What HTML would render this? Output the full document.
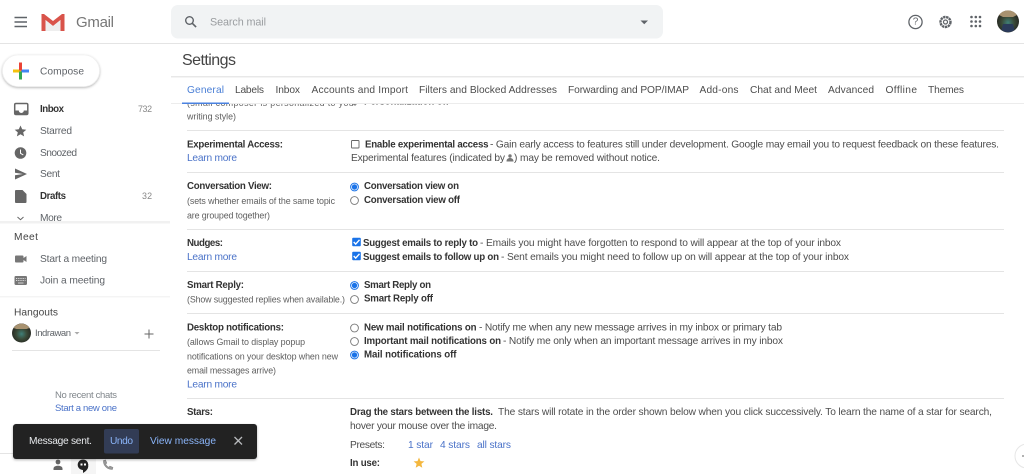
<!DOCTYPE html>
<html><head><meta charset="utf-8"><title>Gmail Settings</title>
<style>
html,body{margin:0;padding:0;background:#fff;width:1024px;height:474px;overflow:hidden}
svg{display:block;filter:blur(.38px)}
text{font-family:"Liberation Sans",sans-serif;font-size:10.2px;fill:#4d4d4d;dominant-baseline:central;transform:translateY(1.500px)}
.b{font-weight:bold;fill:#333;font-size:9.7px}
.l{fill:#4a72c8}
.s{font-size:8.900px;fill:#5f5f5f}
.n{fill:#5f6368}
.line{stroke:#e4e4e4;stroke-width:1}
</style></head><body>
<svg width="1024" height="474" viewBox="0 0 1024 474" xmlns="http://www.w3.org/2000/svg">
<defs>
<filter id="sh" x="-20%" y="-30%" width="140%" height="170%"><feDropShadow dx="0" dy="1" stdDeviation="1.200" flood-color="#000" flood-opacity=".3"/></filter>
<g id="rad"><circle r="3.900" fill="#fff" stroke="#777" stroke-width=".9"/></g>
<g id="radon"><circle r="3.900" fill="#fff" stroke="#1a73e8" stroke-width="1"/><circle r="2.700" fill="#1a73e8"/></g>
<g id="chk"><rect x="-4.300" y="-4.300" width="8.600" height="8.600" rx="1" fill="#1a73e8"/><path d="M-2.800 0 L-.8 2.100 L3 -2.200" fill="none" stroke="#fff" stroke-width="1.400"/></g>
<radialGradient id="av" cx=".5" cy=".55" r=".55"><stop offset="0" stop-color="#3f7f78"/><stop offset=".5" stop-color="#3a4a38"/><stop offset="1" stop-color="#242420"/></radialGradient>
</defs>

<!-- header -->
<path d="M14.500 17.500h12.500M14.500 22h12.500M14.500 26.500h12.500" stroke="#5f6368" stroke-width="1.500"/>
<path d="M41.500 31V14h2.500l9 7 9-7h2.500v17h-4V20l-7.500 6-7.500-6v11z" fill="#d9534a"/>
<path d="M45.500 31V20l7.500 6 7.500-6v11z" fill="#eeeeee"/>
<text x="76" y="21" textLength="38" style="font-size:15px;fill:#777">Gmail</text>
<rect x="171" y="5" width="492" height="33.500" rx="7" fill="#f1f3f4"/>
<circle cx="189.500" cy="20.500" r="3.800" fill="none" stroke="#5f6368" stroke-width="1.400"/>
<path d="M192.300 23.300l3.800 3.800" stroke="#5f6368" stroke-width="1.600"/>
<text x="210" y="21" textLength="56" style="font-size:10.800px;fill:#9a9da0">Search mail</text>
<path d="M640.500 20.500h7.500l-3.750 3.700z" fill="#5f6368"/>
<circle cx="915.500" cy="22" r="6.600" fill="none" stroke="#5f6368" stroke-width="1.300"/>
<text x="915.500" y="20.500" text-anchor="middle" style="font-size:10px;fill:#5f6368">?</text>
<circle cx="945.500" cy="22" r="5" fill="none" stroke="#5f6368" stroke-width="2.400" stroke-dasharray="2.400 .6"/>
<circle cx="945.500" cy="22" r="2" fill="#fff" stroke="#5f6368" stroke-width="1.200"/>
<g fill="#5f6368"><circle cx="971.500" cy="17" r="1.300"/><circle cx="975.800" cy="17" r="1.300"/><circle cx="980" cy="17" r="1.300"/><circle cx="971.500" cy="21.500" r="1.300"/><circle cx="975.800" cy="21.500" r="1.300"/><circle cx="980" cy="21.500" r="1.300"/><circle cx="971.500" cy="26" r="1.300"/><circle cx="975.800" cy="26" r="1.300"/><circle cx="980" cy="26" r="1.300"/></g>
<circle cx="1008" cy="21.500" r="11" fill="url(#av)"/>
<path d="M999 15a11 11 0 0 1 18 0l-4 2h-10z" fill="#a89270"/>
<path d="M1003 24h10l1.500 6a11 11 0 0 1-13 0z" fill="#2a3a5a"/>
<line x1="0" y1="43.500" x2="1024" y2="43.500" class="line"/>

<!-- sidebar -->
<rect x="2.500" y="55" width="97" height="31.500" rx="15.750" fill="#fff" stroke="#eee" stroke-width=".6" filter="url(#sh)"/>
<rect x="13" y="69.500" width="8" height="3" fill="#f4c20d"/>
<rect x="21" y="69.500" width="8" height="3" fill="#4285f4"/>
<rect x="19" y="62.500" width="3" height="8" fill="#ea4335"/>
<rect x="19" y="71.500" width="3" height="8" fill="#34a853"/>
<text x="40" y="70.500" textLength="44" class="n">Compose</text>

<path d="M16 103.500h10.500a1.300 1.300 0 0 1 1.300 1.300v8.400a1.300 1.300 0 0 1-1.300 1.300H16a1.300 1.300 0 0 1-1.300-1.300v-8.400a1.300 1.300 0 0 1 1.300-1.300z" fill="none" stroke="#666" stroke-width="1.500"/>
<path d="M15 110.500h3.800a2.500 2.500 0 0 0 5 0H27.500v3.500H15z" fill="#666"/>
<text x="40" y="108" textLength="24" class="b">Inbox</text>
<text x="138" y="107.500" textLength="14" class="s" style="fill:#888">732</text>
<path d="M20.500 125.500l1.700 3.800 4.100.4-3.100 2.700.9 4-3.600-2.100-3.600 2.100.9-4-3.100-2.700 4.100-.4z" fill="#666"/>
<text x="40" y="130" textLength="32" class="n">Starred</text>
<circle cx="20.500" cy="153" r="5.800" fill="#666"/>
<path d="M20.500 149.500v3.800l2.800 1.600" fill="none" stroke="#fff" stroke-width="1"/>
<text x="40" y="152" textLength="37" class="n">Snoozed</text>
<path d="M15 168.500l12 5.500-12 5.500v-4.300l8-1.200-8-1.200z" fill="#666"/>
<text x="40" y="173" textLength="20" class="n">Sent</text>
<path d="M16 190h6.500l4 4v8a1 1 0 0 1-1 1H16a1 1 0 0 1-1-1v-11a1 1 0 0 1 1-1z" fill="#666"/>
<text x="40" y="195" textLength="26" class="b">Drafts</text>
<text x="142" y="194.500" textLength="10" class="s" style="fill:#888">32</text>
<path d="M17.500 217l3 2.700 3-2.700" fill="none" stroke="#666" stroke-width="1"/>
<text x="40" y="217" textLength="22" class="n">More</text>
<rect x="0" y="221" width="170" height="2.500" fill="#f1f1f1"/>
<text x="14" y="236" textLength="24" style="fill:#444">Meet</text>
<rect x="15" y="255.500" width="8.500" height="7" rx="1" fill="#777"/><path d="M23.500 258l3-2v6l-3-2z" fill="#777"/>
<text x="40" y="258" textLength="67" class="n">Start a meeting</text>
<rect x="14.500" y="276" width="12.500" height="9" rx="1.200" fill="#777"/>
<path d="M16 278.500h9.500M16 280.500h9.500" stroke="#ddd" stroke-width=".9" stroke-dasharray="1 .8"/><path d="M18 283h5.500" stroke="#ddd" stroke-width=".9"/>
<text x="40" y="279.500" textLength="65" class="n">Join a meeting</text>
<rect x="0" y="296" width="170" height="1.500" fill="#f4f4f4"/>
<text x="14" y="311.500" textLength="44" style="fill:#444">Hangouts</text>
<circle cx="21.500" cy="333" r="9.500" fill="url(#av)"/>
<path d="M13.500 328a9.500 9.500 0 0 1 16 0l-3 1h-10z" fill="#a89270"/>
<text x="35" y="332" textLength="36" class="n" style="font-size:9.500px">Indrawan</text>
<path d="M74.500 332h5l-2.500 2.500z" fill="#aaa"/>
<path d="M149 329.500v9M144.500 334h9" stroke="#666" stroke-width="1"/>
<line x1="12" y1="350.500" x2="160" y2="350.500" class="line"/>
<text x="55" y="394" textLength="62" class="s" style="fill:#80868b;font-size:9.500px">No recent chats</text>
<text x="55" y="407" textLength="62" class="l" style="font-size:9.500px">Start a new one</text>

<line x1="0" y1="453.500" x2="170" y2="453.500" class="line"/>
<rect x="71" y="453" width="25" height="21" fill="#f5f5f5"/>
<circle cx="58" cy="462" r="2.400" fill="#666"/><path d="M53.500 470v-1.500c0-2 2.500-2.800 4.500-2.800s4.500.8 4.500 2.800V470z" fill="#666"/>
<path d="M83 470.500v2.500c2.500-1.500 5.300-3.500 5.300-7.200L83 464z" fill="#222"/>
<circle cx="83" cy="464.800" r="5.300" fill="#222"/>
<path d="M80.500 463.500h2v2h-2zM84 463.500h2v2h-2z" fill="#fff"/>
<path d="M103.500 460.500l2-.5 1.300 3-1.200 1c.6 1.500 1.800 2.700 3.300 3.300l1-1.200 3 1.300-.5 2c-5 .4-9.400-4-8.900-8.900z" fill="#999" stroke="#888" stroke-width=".6"/>

<!-- snackbar -->
<rect x="13" y="424" width="244" height="35" rx="3" fill="#202124" filter="url(#sh)"/>
<text x="29" y="440" textLength="63" style="fill:#e8eaed">Message sent.</text>
<rect x="104" y="429" width="35" height="24.500" rx="2" fill="#323c55"/>
<text x="110" y="440" textLength="23" style="fill:#8ab4f8">Undo</text>
<text x="150" y="440" textLength="66" style="fill:#8ab4f8">View message</text>
<path d="M234.500 437l7.500 7.500M242 437l-7.500 7.500" stroke="#b8babd" stroke-width="1.300"/>

<!-- settings title + tabs -->
<text x="182" y="59" textLength="54" style="font-size:16px;fill:#444">Settings</text>
<rect x="171" y="76" width="853" height="1.500" fill="#e8e8e8"/>

<!-- content -->
<text x="187" y="101.500" textLength="170" class="s" style="fill:#666">(small composer is personalized to your</text>
<use href="#rad" x="354.500" y="100.500"/>
<text x="364" y="100.500" textLength="85" class="b">Personalization off</text>
<rect x="171" y="77.500" width="853" height="25.500" fill="#fff"/>
<line x1="171" y1="103.500" x2="1024" y2="103.500" stroke="#ececec"/>
<text x="187" y="89" textLength="37" style="fill:#4a7fd6">General</text>
<text x="235" y="89" textLength="29">Labels</text>
<text x="275.500" y="89" textLength="24.500">Inbox</text>
<text x="311.500" y="89" textLength="96.500">Accounts and Import</text>
<text x="419" y="89" textLength="138">Filters and Blocked Addresses</text>
<text x="568" y="89" textLength="121">Forwarding and POP/IMAP</text>
<text x="699.500" y="89" textLength="39">Add-ons</text>
<text x="750" y="89" textLength="67">Chat and Meet</text>
<text x="828" y="89" textLength="46">Advanced</text>
<text x="885.500" y="89" textLength="31.500">Offline</text>
<text x="928" y="89" textLength="36">Themes</text>
<rect x="182" y="102.500" width="47" height="1.500" fill="#4a82e0"/>

<text x="187" y="115" textLength="49" class="s">writing style)</text>
<line x1="187" y1="130.500" x2="1004" y2="130.500" class="line"/>

<text x="187" y="143.500" textLength="96" class="b">Experimental Access:</text>
<text x="187" y="157" textLength="50" class="l">Learn more</text>
<rect x="351.500" y="140.500" width="7.500" height="7.500" rx=".8" fill="#fff" stroke="#666" stroke-width=".9"/>
<text x="365" y="143.500" textLength="123.500" class="b">Enable experimental access</text>
<text x="490" y="143.500" textLength="509">- Gain early access to features still under development. Google may email you to request feedback on these features.</text>
<text x="351" y="157" textLength="154">Experimental features (indicated by</text>
<circle cx="510" cy="156" r="1.700" fill="#777"/><path d="M506.500 161.500c0-2.500 1.500-3.500 3.500-3.500s3.500 1 3.500 3.500z" fill="#777"/>
<text x="514" y="157" textLength="146">) may be removed without notice.</text>
<line x1="187" y1="172.500" x2="1004" y2="172.500" class="line"/>

<text x="187" y="185" textLength="85" class="b">Conversation View:</text>
<text x="187" y="199.500" textLength="148" class="s">(sets whether emails of the same topic</text>
<text x="187" y="214" textLength="83" class="s">are grouped together)</text>
<use href="#radon" x="354.500" y="187"/>
<use href="#rad" x="354.500" y="200.500"/>
<text x="364" y="185" textLength="95" class="b">Conversation view on</text>
<text x="364" y="199" textLength="96" class="b">Conversation view off</text>
<line x1="187" y1="229.500" x2="1004" y2="229.500" class="line"/>

<text x="187" y="242" textLength="36" class="b">Nudges:</text>
<text x="187" y="256" textLength="50" class="l">Learn more</text>
<use href="#chk" x="356.500" y="242"/>
<use href="#chk" x="356.500" y="256"/>
<text x="363" y="242" textLength="115" class="b">Suggest emails to reply to</text>
<text x="480" y="242" textLength="361">- Emails you might have forgotten to respond to will appear at the top of your inbox</text>
<text x="363" y="256" textLength="136" class="b">Suggest emails to follow up on</text>
<text x="501" y="256" textLength="348">- Sent emails you might need to follow up on will appear at the top of your inbox</text>
<line x1="187" y1="271.500" x2="1004" y2="271.500" class="line"/>

<text x="187" y="284" textLength="57" class="b">Smart Reply:</text>
<text x="187" y="298" textLength="158" class="s">(Show suggested replies when available.)</text>
<use href="#radon" x="354.500" y="285.500"/>
<use href="#rad" x="354.500" y="299.500"/>
<text x="364" y="284" textLength="67" class="b">Smart Reply on</text>
<text x="364" y="297.500" textLength="69" class="b">Smart Reply off</text>
<line x1="187" y1="313.500" x2="1004" y2="313.500" class="line"/>

<text x="187" y="326.500" textLength="97" class="b">Desktop notifications:</text>
<text x="187" y="340.500" textLength="118" class="s">(allows Gmail to display popup</text>
<text x="187" y="355" textLength="151" class="s">notifications on your desktop when new</text>
<text x="187" y="369" textLength="89" class="s">email messages arrive)</text>
<text x="187" y="383.500" textLength="50" class="l">Learn more</text>
<use href="#rad" x="354.500" y="328"/>
<use href="#rad" x="354.500" y="341.500"/>
<use href="#radon" x="354.500" y="355"/>
<text x="364" y="326.500" textLength="112.500" class="b">New mail notifications on</text>
<text x="479" y="326.500" textLength="303">- Notify me when any new message arrives in my inbox or primary tab</text>
<text x="364" y="340" textLength="137" class="b">Important mail notifications on</text>
<text x="503" y="340" textLength="280">- Notify me only when an important message arrives in my inbox</text>
<text x="364" y="353.500" textLength="92.500" class="b">Mail notifications off</text>
<line x1="187" y1="398.500" x2="1004" y2="398.500" class="line"/>

<text x="187" y="411" textLength="26" class="b">Stars:</text>
<text x="350" y="411" textLength="143" class="b">Drag the stars between the lists.</text>
<text x="498" y="411" textLength="494">The stars will rotate in the order shown below when you click successively. To learn the name of a star for search,</text>
<text x="350" y="425" textLength="147">hover your mouse over the image.</text>
<text x="350" y="444" textLength="35">Presets:</text>
<text x="408" y="444" textLength="25" class="l">1 star</text>
<text x="440" y="444" textLength="30" class="l">4 stars</text>
<text x="477" y="444" textLength="34" class="l">all stars</text>
<text x="350" y="462" textLength="30" class="b">In use:</text>
<path d="M419 457.500l1.500 3.600 3.900.3-3 2.500.9 3.800-3.300-2-3.300 2 .9-3.800-3-2.500 3.900-.3z" fill="#f4b73e"/>

<circle cx="1027" cy="456" r="12" fill="#fff" stroke="#e6e6e6"/>
<path d="M1022 456h2" stroke="#666"/>
</svg>
</body></html>
